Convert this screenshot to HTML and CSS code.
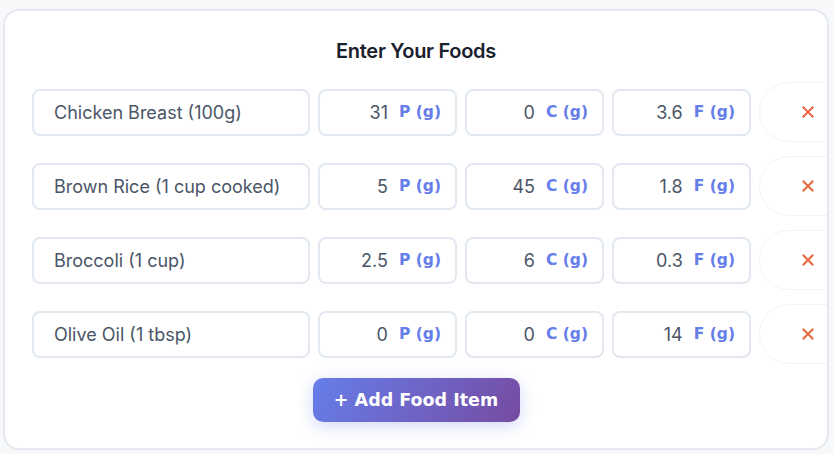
FILE: index.html
```html
<!DOCTYPE html>
<html lang="en">
<head>
<meta charset="utf-8">
<title>Enter Your Foods</title>
<link rel="stylesheet" href="styles.css">
</head>
<body>
<div class="card">
  <h2 class="title">Enter Your Foods</h2>
  <div class="rows">
    <div class="row">
      <div class="field name">Chicken Breast (100g)</div>
      <div class="field macro"><span class="val">31</span><span class="unit">P (g)</span></div>
      <div class="field macro"><span class="val">0</span><span class="unit">C (g)</span></div>
      <div class="field macro"><span class="val">3.6</span><span class="unit">F (g)</span></div>
      <button class="del" aria-label="Remove"><svg class="x" viewBox="0 0 12 12"><path d="M1.5 1.5 L10.5 10.5 M10.5 1.5 L1.5 10.5"/></svg></button>
    </div>
    <div class="row">
      <div class="field name">Brown Rice (1 cup cooked)</div>
      <div class="field macro"><span class="val">5</span><span class="unit">P (g)</span></div>
      <div class="field macro"><span class="val">45</span><span class="unit">C (g)</span></div>
      <div class="field macro"><span class="val">1.8</span><span class="unit">F (g)</span></div>
      <button class="del" aria-label="Remove"><svg class="x" viewBox="0 0 12 12"><path d="M1.5 1.5 L10.5 10.5 M10.5 1.5 L1.5 10.5"/></svg></button>
    </div>
    <div class="row">
      <div class="field name">Broccoli (1 cup)</div>
      <div class="field macro"><span class="val">2.5</span><span class="unit">P (g)</span></div>
      <div class="field macro"><span class="val">6</span><span class="unit">C (g)</span></div>
      <div class="field macro"><span class="val">0.3</span><span class="unit">F (g)</span></div>
      <button class="del" aria-label="Remove"><svg class="x" viewBox="0 0 12 12"><path d="M1.5 1.5 L10.5 10.5 M10.5 1.5 L1.5 10.5"/></svg></button>
    </div>
    <div class="row">
      <div class="field name">Olive Oil (1 tbsp)</div>
      <div class="field macro"><span class="val">0</span><span class="unit">P (g)</span></div>
      <div class="field macro"><span class="val">0</span><span class="unit">C (g)</span></div>
      <div class="field macro"><span class="val">14</span><span class="unit">F (g)</span></div>
      <button class="del" aria-label="Remove"><svg class="x" viewBox="0 0 12 12"><path d="M1.5 1.5 L10.5 10.5 M10.5 1.5 L1.5 10.5"/></svg></button>
    </div>
  </div>
  <div class="actions">
    <button class="add">+ Add Food Item</button>
  </div>
</div>
</body>
</html>
```

FILE: styles.css
```css
html, body {
  margin: 0;
  padding: 0;
  background: #f7f8fa;
  font-family: Inter, "Noto Sans", "Liberation Sans", sans-serif;
}
body {
  padding: 9px 5px 4px 3px;
}
.card {
  background: #ffffff;
  border: 2px solid #e5e9ef;
  border-radius: 16px;
  padding: 26px 27px 26px 27px;
  overflow: hidden;
  height: 441px;
  box-sizing: border-box;
}
.title {
  margin: 0 0 17px 0;
  text-align: center;
  font-size: 20px;
  line-height: 28px;
  font-weight: 600;
  color: #1a202c;
  letter-spacing: -0.3px;
}
.rows {
  display: flex;
  flex-direction: column;
  gap: 14px;
}
.row {
  display: grid;
  grid-template-columns: 278px 139px 139px 139px 98px;
  gap: 8px;
  align-items: center;
  height: 60px;
}
.field {
  box-sizing: border-box;
  height: 47px;
  border: 2px solid #e2e8f0;
  border-radius: 8px;
  background: #fff;
  display: flex;
  align-items: center;
  font-size: 18px;
  color: #4a5568;
}
.name {
  padding-left: 20px;
}
.macro {
  justify-content: flex-end;
  padding-right: 14px;
}
.val {
  margin-right: 11px;
}
.unit {
  font-family: "DejaVu Sans", sans-serif;
  font-weight: 700;
  font-size: 15.5px;
  color: #667eea;
}
.del {
  height: 60px;
  width: 98px;
  border: 1px solid #f2f3f5;
  border-radius: 30px;
  background: #fff;
  padding: 0;
  display: flex;
  align-items: center;
  justify-content: center;
  cursor: pointer;
}
.x {
  width: 12px;
  height: 12px;
  fill: none;
  stroke: #e9673f;
  stroke-width: 2;
  stroke-linecap: square;
}
.actions {
  display: flex;
  justify-content: center;
  margin-top: 14px;
}
.add {
  height: 44px;
  width: 207px;
  border: none;
  border-radius: 10px;
  background: linear-gradient(120deg, #667eea 0%, #764ba2 100%);
  color: #fff;
  font-family: "DejaVu Sans", sans-serif;
  font-weight: 700;
  font-size: 17.5px;
  padding: 0;
  box-shadow: 0 4px 16px rgba(102, 126, 234, 0.3);
  cursor: pointer;
}
```
